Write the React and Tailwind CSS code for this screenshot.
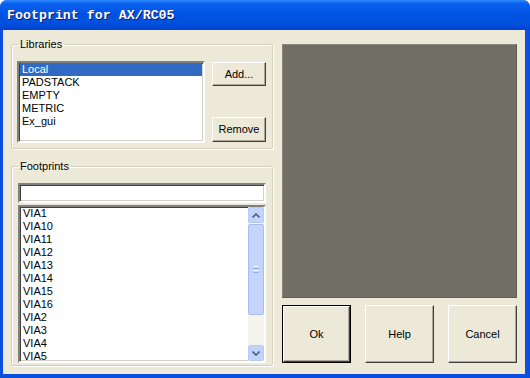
import React from 'react';

const libraries = ['Local', 'PADSTACK', 'EMPTY', 'METRIC', 'Ex_gui'];
const footprints = ['VIA1', 'VIA10', 'VIA11', 'VIA12', 'VIA13', 'VIA14', 'VIA15', 'VIA16', 'VIA2', 'VIA3', 'VIA4', 'VIA5'];

const sunken =
  'border-2 border-t-[#808080] border-l-[#808080] border-b-white border-r-white shadow-[inset_1px_1px_0_#404040,inset_-1px_-1px_0_#D4D0C8] bg-white';

function Button({ children, className = '', isDefault = false }) {
  const face = (
    <div className="w-full h-full flex items-center justify-center border border-t-white border-l-white border-b-[#404040] border-r-[#404040] shadow-[inset_-1px_-1px_0_#ACA899] bg-[#ECE9D8] text-[11px] text-black">
      {children}
    </div>
  );
  if (isDefault) {
    return <div className={`border border-black ${className}`}>{face}</div>;
  }
  return <div className={className}>{face}</div>;
}

function Group({ label, className = '', children }) {
  return (
    <fieldset className={`border border-[#D0D0BF] shadow-[1px_1px_0_white,inset_1px_1px_0_white] rounded-[2px] ${className}`}>
      <legend className="ml-[6px] px-[2px] text-[11px] leading-[13px] text-black">{label}</legend>
      {children}
    </fieldset>
  );
}

function ScrollBar() {
  return (
    <div className="w-[16px] h-full flex flex-col bg-[#F4F3EE]">
      <div className="h-[16px] flex items-center justify-center rounded-[2px] border border-[#B7CAF5] bg-[#C3D4FC]">
        <svg width="8" height="5" viewBox="0 0 8 5">
          <path d="M0.5 4.5 L4 1 L7.5 4.5" fill="none" stroke="#4D6185" strokeWidth="1.6" />
        </svg>
      </div>
      <div className="h-[91px] mt-[1px] flex flex-col items-center justify-center gap-[1px] rounded-[2px] border border-[#A7BDEF] bg-[#C4D4FC]">
        <div className="w-[6px] h-px bg-[#EEF4FE]" />
        <div className="w-[6px] h-px bg-[#8CB0F8]" />
        <div className="w-[6px] h-px bg-[#EEF4FE]" />
        <div className="w-[6px] h-px bg-[#8CB0F8]" />
      </div>
      <div className="flex-1" />
      <div className="h-[16px] flex items-center justify-center rounded-[2px] border border-[#B7CAF5] bg-[#C3D4FC]">
        <svg width="8" height="5" viewBox="0 0 8 5">
          <path d="M0.5 0.5 L4 4 L7.5 0.5" fill="none" stroke="#4D6185" strokeWidth="1.6" />
        </svg>
      </div>
    </div>
  );
}

export default function App() {
  return (
    <div
      className="w-[530px] h-[378px] flex flex-col bg-[#0A4FDF] rounded-t-[7px] overflow-hidden"
      style={{ fontFamily: '"Liberation Sans", Arial, sans-serif' }}
    >
      <div className="h-[30px] shrink-0 flex items-center pl-[7px] pt-[1px] bg-[linear-gradient(to_bottom,#2D8BFF_0%,#0A61F0_12%,#0054E3_45%,#0050DE_80%,#0043CF_100%)]">
        <span
          className="text-white font-bold text-[13.3px] leading-none [text-shadow:1px_1px_0_#0A1A6E]"
          style={{ fontFamily: '"Liberation Mono", "Courier New", monospace' }}
        >
          Footprint for AX/RC05
        </span>
      </div>

      <div className="flex-1 ml-[3px] mr-[5px] mb-[4px] bg-[#ECE9D8] flex">
        {/* left column */}
        <div className="ml-[8px] w-[262px] pt-[8px] flex flex-col">
          <Group label="Libraries" className="h-[111px]">
            <div className="flex mt-[10px] pl-[5px]">
              <div className={`w-[188px] h-[82px] ${sunken} p-[1px] pt-0`}>
                {libraries.map((l, i) => (
                  <div
                    key={l}
                    className={`h-[13px] leading-[13px] text-[11px] pl-[2px] ${i === 0 ? 'bg-[#316AC5] text-white' : 'text-black'}`}
                  >
                    {l}
                  </div>
                ))}
              </div>
              <div className="ml-[7px] flex flex-col">
                <Button className="w-[54px] h-[24px] mt-[1px]">Add...</Button>
                <Button className="w-[54px] h-[25px] mt-[31px]">Remove</Button>
              </div>
            </div>
          </Group>

          <Group label="Footprints" className="h-[206px] mt-[11px]">
            <div className="pl-[6px]">
              <div className={`w-[248px] h-[20px] mt-[10px] ${sunken}`} />
              <div className={`w-[248px] h-[158px] mt-[2px] ${sunken} flex`}>
                <div className="flex-1">
                  {footprints.map((f) => (
                    <div key={f} className="h-[13px] leading-[13px] text-[11px] pl-[3px] text-black">
                      {f}
                    </div>
                  ))}
                </div>
                <ScrollBar />
              </div>
            </div>
          </Group>
        </div>

        {/* right column */}
        <div className="ml-[9px] w-[235px] pt-[14px] flex flex-col">
          <div className="h-[254px] bg-[#716F64] border border-t-[#8A887C] border-l-[#8A887C] border-b-[#5F5D53] border-r-[#5F5D53]" />
          <div className="mt-[7px] flex justify-between">
            <Button isDefault className="w-[69px] h-[58px]">Ok</Button>
            <Button className="w-[69px] h-[58px]">Help</Button>
            <Button className="w-[69px] h-[58px]">Cancel</Button>
          </div>
        </div>
      </div>
    </div>
  );
}
